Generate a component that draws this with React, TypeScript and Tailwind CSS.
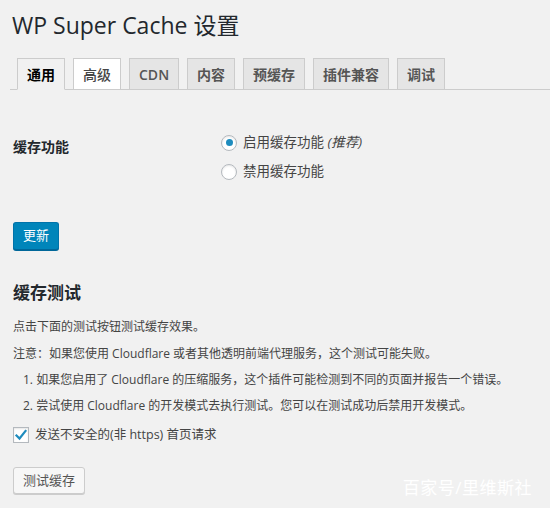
import React from "react";

const FONT = { fontFamily: '"Open Sans", "Noto Sans CJK SC", sans-serif' };

function Tab({ label, variant }: { label: string; variant: "active" | "hover" | "normal" }) {
  const base = "h-8 flex items-center px-[9px] border border-[#cccccc] text-[14px] -mb-px";
  const cls =
    variant === "active"
      ? "bg-[#f1f1f1] text-black font-bold border-b-[#f1f1f1]"
      : variant === "hover"
      ? "bg-white text-[#464646] font-medium"
      : "bg-[#e5e5e5] text-[#555555] font-semibold";
  return <div className={`${base} ${cls}`}>{label}</div>;
}

function Radio({ checked }: { checked?: boolean }) {
  return (
    <span className="w-4 h-4 rounded-full border border-[#b4b9be] bg-white shadow-[inset_0_1px_2px_rgba(0,0,0,0.1)] flex items-center justify-center shrink-0">
      {checked && <span className="w-[7px] h-[7px] rounded-full bg-[#1e8cbe]" />}
    </span>
  );
}

export default function App() {
  return (
    <div className="relative w-[550px] h-[508px] bg-[#f1f1f1] overflow-hidden text-[#444444]" style={FONT}>
      <h1 className="mt-[11px] ml-[12px] text-[23px] leading-[29px] text-[#23282d] font-normal">
        WP Super Cache 设置
      </h1>

      <div className="mt-[18px] ml-[10px] pl-[7px] flex gap-2 border-b border-[#cccccc]">
        <Tab label="通用" variant="active" />
        <Tab label="高级" variant="hover" />
        <Tab label="CDN" variant="normal" />
        <Tab label="内容" variant="normal" />
        <Tab label="预缓存" variant="normal" />
        <Tab label="插件兼容" variant="normal" />
        <Tab label="调试" variant="normal" />
      </div>

      <div className="mt-[38px] ml-[13px] flex items-start">
        <div className="w-[208px] mt-[9px] h-5 leading-5 text-[14px] font-semibold text-[#23282d]">缓存功能</div>
        <div className="flex flex-col">
          <div className="h-[29px] flex items-center gap-[6px] text-[13.5px] text-[#444444]">
            <Radio checked />
            <span>
              启用缓存功能 <em className="italic">(推荐)</em>
            </span>
          </div>
          <div className="h-[29px] flex items-center gap-[6px] text-[13.5px] text-[#444444]">
            <Radio />
            <span>禁用缓存功能</span>
          </div>
        </div>
      </div>

      <div className="mt-[36px] ml-[13px]">
        <button className="h-[28px] px-[9px] rounded-[3px] bg-[#0085ba] border border-[#0073aa] border-b-[#006799] text-white text-[13px] shadow-[0_1px_0_#006799]">
          更新
        </button>
      </div>

      <h2 className="mt-[31px] ml-[13px] text-[17px] leading-[24px] font-bold text-[#23282d]">缓存测试</h2>

      <div className="ml-[13px] text-[12px] text-[#444444]">
        <p className="mt-[8px] leading-[28px]">点击下面的测试按钮测试缓存效果。</p>
        <p className="leading-[26px]">注意：如果您使用 Cloudflare 或者其他透明前端代理服务，这个测试可能失败。</p>
        <ol className="pl-[10px]">
          <li className="leading-[26px]">1. 如果您启用了 Cloudflare 的压缩服务，这个插件可能检测到不同的页面并报告一个错误。</li>
          <li className="leading-[26px]">2. 尝试使用 Cloudflare 的开发模式去执行测试。您可以在测试成功后禁用开发模式。</li>
        </ol>
        <label className="h-8 flex items-center gap-[6px]">
          <span className="w-4 h-4 border border-[#b4b9be] bg-white shadow-[inset_0_1px_2px_rgba(0,0,0,0.1)] flex items-center justify-center">
            <svg width="14" height="14" viewBox="0 0 14 14">
              <path d="M2.5 7.5 L5.5 10.5 L11.5 3" fill="none" stroke="#1e8cbe" strokeWidth="2.2" strokeLinecap="square" />
            </svg>
          </span>
          <span className="text-[12.5px]">发送不安全的(非 https) 首页请求</span>
        </label>
        <button className="mt-4 h-[27px] px-[9px] rounded-[3px] bg-[#f7f7f7] border border-[#cccccc] text-[#555555] text-[13px] shadow-[0_1px_0_#cccccc]">
          测试缓存
        </button>
      </div>

      <div className="absolute right-[18px] bottom-[8px] text-[17px] text-white tracking-[0.5px]">百家号/里维斯社</div>
    </div>
  );
}
